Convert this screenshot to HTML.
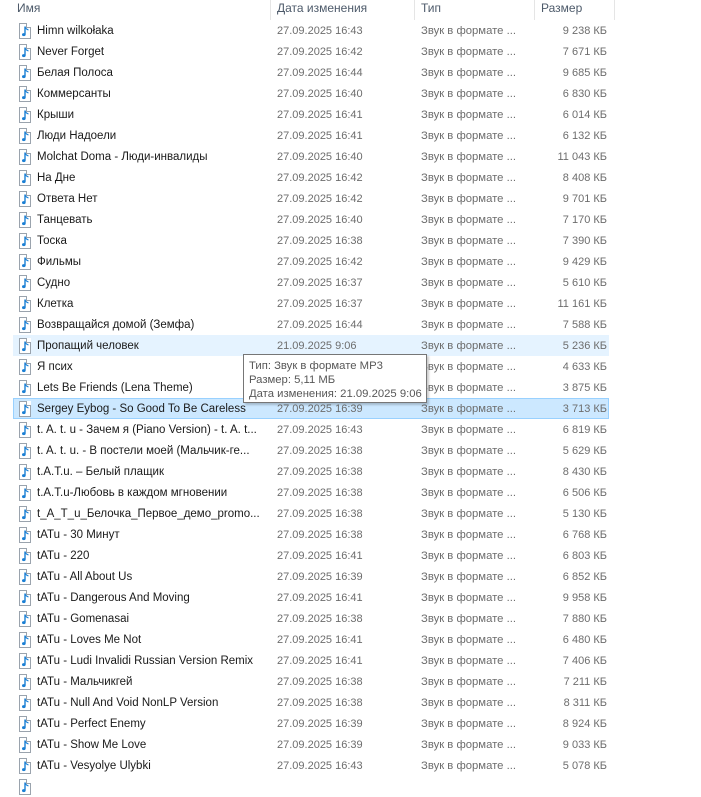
<!DOCTYPE html>
<html><head><meta charset="utf-8"><style>
body{margin:0;width:701px;height:790px;background:#fff;overflow:hidden;position:relative;font-family:"Liberation Sans",sans-serif;font-size:11.5px;color:#1a1a1a}
.h{position:absolute;top:0;height:20px;line-height:16px;color:#4d5a6a;font-size:12px}
.sep{position:absolute;top:0;width:1px;height:20px;background:#e5e5e5}
.r{position:absolute;left:13px;width:596px;height:21px;line-height:21px}
.r span{position:absolute;white-space:nowrap;top:1px}
.n{left:24px}
.d{left:264px;color:#6d6d6d;font-size:11px}
.t{left:408px;color:#6d6d6d;font-size:11.3px}
.s{right:2px;color:#6d6d6d;font-size:11px}
.ic{position:absolute;left:6px;top:3px;width:10px;height:14px;border:1px solid #9aa3ad;background:#fff}
.ic:after{content:"";position:absolute;right:-1px;top:-1px;width:4px;height:4px;background:#fff;border-left:1px solid #9aa3ad;border-bottom:1px solid #9aa3ad}
.hov{background:#e5f3ff}
.sel{background:#cce8ff;box-shadow:inset 0 0 0 1px #99d1ff}
.tip{position:absolute;left:243px;top:354px;width:184px;height:49px;border:1px solid #767676;background:#fff;box-shadow:2px 2px 2px rgba(0,0,0,.2);color:#575757;font-size:11.3px;line-height:14px;padding:4px 0 0 5px;box-sizing:border-box;white-space:nowrap}
</style></head><body>
<div class="h" style="left:17px">Имя</div>
<div class="sep" style="left:270px"></div>
<div class="h" style="left:277px">Дата изменения</div>
<div class="sep" style="left:414px"></div>
<div class="h" style="left:421px">Тип</div>
<div class="sep" style="left:534px"></div>
<div class="h" style="left:541px">Размер</div>
<div class="sep" style="left:614px"></div>
<div id="rows"></div>
<div class="tip">Тип: Звук в формате MP3<br>Размер: 5,11 МБ<br>Дата изменения: 21.09.2025 9:06</div>
<script>
var data=[["Himn wilkołaka","27.09.2025 16:43","9 238 КБ"],["Never Forget","27.09.2025 16:42","7 671 КБ"],["Белая Полоса","27.09.2025 16:44","9 685 КБ"],["Коммерсанты","27.09.2025 16:40","6 830 КБ"],["Крыши","27.09.2025 16:41","6 014 КБ"],["Люди Надоели","27.09.2025 16:41","6 132 КБ"],["Molchat Doma - Люди-инвалиды","27.09.2025 16:40","11 043 КБ"],["На Дне","27.09.2025 16:42","8 408 КБ"],["Ответа Нет","27.09.2025 16:42","9 701 КБ"],["Танцевать","27.09.2025 16:40","7 170 КБ"],["Тоска","27.09.2025 16:38","7 390 КБ"],["Фильмы","27.09.2025 16:42","9 429 КБ"],["Судно","27.09.2025 16:37","5 610 КБ"],["Клетка","27.09.2025 16:37","11 161 КБ"],["Возвращайся домой (Земфа)","27.09.2025 16:44","7 588 КБ"],["Пропащий человек","21.09.2025 9:06","5 236 КБ"],["Я псих","27.09.2025 16:38","4 633 КБ"],["Lets Be Friends (Lena Theme)","27.09.2025 16:38","3 875 КБ"],["Sergey Eybog - So Good To Be Careless","27.09.2025 16:39","3 713 КБ"],["t. A. t. u - Зачем я (Piano Version) - t. A. t...","27.09.2025 16:43","6 819 КБ"],["t. A. t. u. - В постели моей (Мальчик-ге...","27.09.2025 16:38","5 629 КБ"],["t.A.T.u. – Белый плащик","27.09.2025 16:38","8 430 КБ"],["t.A.T.u-Любовь в каждом мгновении","27.09.2025 16:38","6 506 КБ"],["t_A_T_u_Белочка_Первое_демо_promo...","27.09.2025 16:38","5 130 КБ"],["tATu - 30 Минут","27.09.2025 16:38","6 768 КБ"],["tATu - 220","27.09.2025 16:41","6 803 КБ"],["tATu - All About Us","27.09.2025 16:39","6 852 КБ"],["tATu - Dangerous And Moving","27.09.2025 16:41","9 958 КБ"],["tATu - Gomenasai","27.09.2025 16:38","7 880 КБ"],["tATu - Loves Me Not","27.09.2025 16:41","6 480 КБ"],["tATu - Ludi Invalidi Russian Version Remix","27.09.2025 16:41","7 406 КБ"],["tATu - Мальчикгей","27.09.2025 16:38","7 211 КБ"],["tATu - Null And Void NonLP Version","27.09.2025 16:38","8 311 КБ"],["tATu - Perfect Enemy","27.09.2025 16:39","8 924 КБ"],["tATu - Show Me Love","27.09.2025 16:39","9 033 КБ"],["tATu - Vesyolye Ulybki","27.09.2025 16:43","5 078 КБ"],["","",""]];
var note='<svg width="7" height="11" viewBox="0 0 7 11" style="position:absolute;left:2px;top:2px"><path d="M3 0.5V8.5" stroke="#1a7fd4" stroke-width="1.4"/><path d="M3 0.5Q3.5 3 6.5 4" stroke="#1a7fd4" stroke-width="1.1" fill="none"/><ellipse cx="1.8" cy="8.6" rx="1.8" ry="1.5" fill="#1a7fd4"/></svg>';
var h="";data.forEach(function(d,i){var c=i==15?" hov":i==18?" sel":"";var y=20+i*21;
h+='<div class="r'+c+'" style="top:'+y+'px"><div class="ic">'+note+'</div>'+(d[0]?'<span class="n">'+d[0]+'</span><span class="d">'+d[1]+'</span><span class="t">Звук в формате ...</span><span class="s">'+d[2]+'</span>':'')+'</div>';});
document.getElementById("rows").innerHTML=h;
</script>
</body></html>
